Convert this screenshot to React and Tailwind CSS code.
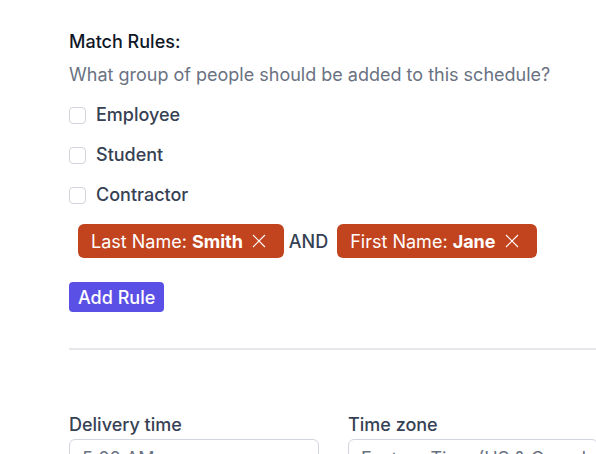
const groups = ["Employee", "Student", "Contractor"];

const rules = [
  { field: "Last Name", value: "Smith" },
  { field: "First Name", value: "Jane" },
];

function RuleChip({ field, value }) {
  return (
    <span className="inline-flex h-[34px] items-center gap-[9px] rounded-md bg-[#c2441f] pl-[13px] pr-[18px] text-[18px] text-white">
      <span>
        {field}: <span className="font-bold">{value}</span>
      </span>
      <svg viewBox="0 0 14 14" className="h-[14px] w-[14px]" fill="none" stroke="currentColor" strokeWidth="1.1" aria-hidden="true">
        <path d="M1 1l12 12M13 1L1 13" />
      </svg>
    </span>
  );
}

export default function App() {
  return (
    <div className="min-h-screen w-full overflow-hidden bg-white font-['Inter',sans-serif] text-gray-700">
      <div className="w-[529px] pl-[69px] pt-[30px] box-content">
        <h2 className="text-[18px] leading-6 font-medium text-gray-900">Match Rules:</h2>
        <p className="mt-[9px] text-[18px] leading-6 text-gray-500">
          What group of people should be added to this schedule?
        </p>

        <div className="mt-[16px] flex flex-col gap-4">
          {groups.map((g) => (
            <label key={g} className="flex items-center gap-[10px] text-[18px] leading-6 font-medium text-gray-700">
              <input type="checkbox" className="h-[17px] w-[17px] appearance-none rounded border border-gray-300 bg-white" />
              {g}
            </label>
          ))}
        </div>

        <div className="mt-[17px] flex items-center pl-[9px]">
          <RuleChip {...rules[0]} />
          <span className="ml-[5px] mr-[9px] text-[18px] font-medium text-gray-700">AND</span>
          <RuleChip {...rules[1]} />
        </div>

        <button className="mt-6 h-[30px] rounded bg-[#5a50e6] px-[9px] text-[18px] font-medium text-white">
          Add Rule
        </button>

        <div className="mt-[36px] border-t-2 border-gray-200" />

        <div className="mt-[63px] grid grid-cols-2 gap-[29px]">
          <div>
            <label className="block text-[18px] leading-6 font-medium text-gray-700">Delivery time</label>
            <input
              className="mt-[2px] h-[38px] w-full rounded-md border border-gray-300 px-3 text-[18px] text-gray-500"
              defaultValue="5:00 AM"
            />
          </div>
          <div>
            <label className="block text-[18px] leading-6 font-medium text-gray-700">Time zone</label>
            <input
              className="mt-[2px] h-[38px] w-full rounded-md border border-gray-300 px-3 text-[18px] text-gray-500"
              defaultValue="Eastern Time (US & Canada)"
            />
          </div>
        </div>
      </div>
    </div>
  );
}
